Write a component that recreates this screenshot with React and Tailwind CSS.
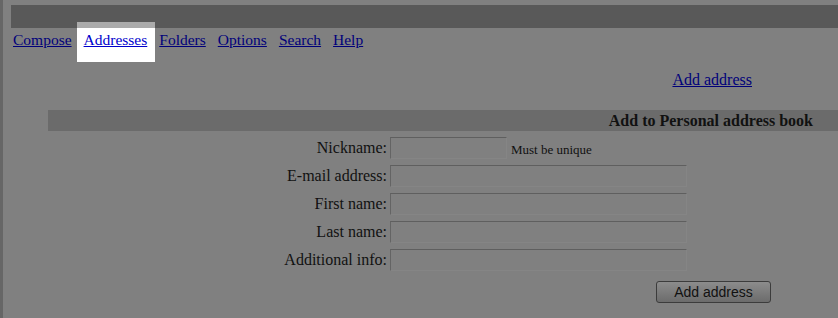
import React from "react";

const serif = { fontFamily: '"Liberation Serif", "Times New Roman", serif' };

function Field({ label, width, extra }) {
  return (
    <div className="flex items-center h-[28px]">
      <div className="w-[384px] text-right text-[16px] text-[#111111] leading-[18px]">{label}</div>
      <div className={`ml-[3px] h-[22px] ${width} bg-[#808080] border border-t-[#5f5f5f] border-l-[#646464] border-b-[#858585] border-r-[#858585]`}></div>
      {extra ? <span className="ml-[4px] mt-[4px] text-[13px] text-[#111111]">{extra}</span> : null}
    </div>
  );
}

export default function App() {
  const links = ["Compose", "Addresses", "Folders", "Options", "Search", "Help"];
  return (
    <div className="relative w-[838px] h-[318px] overflow-hidden bg-[#808080] border-l-[3px] border-[#666666]" style={serif}>
      <div className="ml-[8px] mt-[5px] h-[23px] bg-[#595959]"></div>
      <div className="absolute left-[74px] top-[22px] w-[78px] h-[40px] bg-white">
        <div className="h-[6px] bg-[#ababab]"></div>
      </div>
      <div className="relative mt-[3px] h-[18px] pl-[10px] flex gap-[12px] text-[15.5px] leading-[18px]">
        {links.map((l) => (
          <a
            key={l}
            href="#"
            className={`underline ${l === "Addresses" ? "text-[#0000cc]" : "text-[#00007a]"}`}
          >
            {l}
          </a>
        ))}
      </div>
      <div className="mt-[22px] h-[18px] pr-[86px] text-right text-[16px] leading-[18px]">
        <a href="#" className="underline text-[#00007a]">Add address</a>
      </div>
      <div className="mt-[21px] ml-[45px] h-[21px] bg-[#6b6b6b] pr-[25px] flex items-center justify-end text-[16px] font-bold text-[#111111]">
        Add to Personal address book
      </div>
      <div className="mt-[3px]">
        <Field label="Nickname:" width="w-[117px]" extra="Must be unique" />
        <Field label="E-mail address:" width="w-[297px]" />
        <Field label="First name:" width="w-[297px]" />
        <Field label="Last name:" width="w-[297px]" />
        <Field label="Additional info:" width="w-[297px]" />
      </div>
      <div className="mt-[6px] pl-[653px]">
        <button
          className="w-[115px] h-[22px] rounded-[3px] border border-[#3c3c3c] bg-gradient-to-b from-[#8c8c8c] to-[#6c6c6c] text-[14px] leading-[20px] text-[#111111]"
          style={{ fontFamily: '"Liberation Sans", Arial, sans-serif' }}
        >
          Add address
        </button>
      </div>
    </div>
  );
}
